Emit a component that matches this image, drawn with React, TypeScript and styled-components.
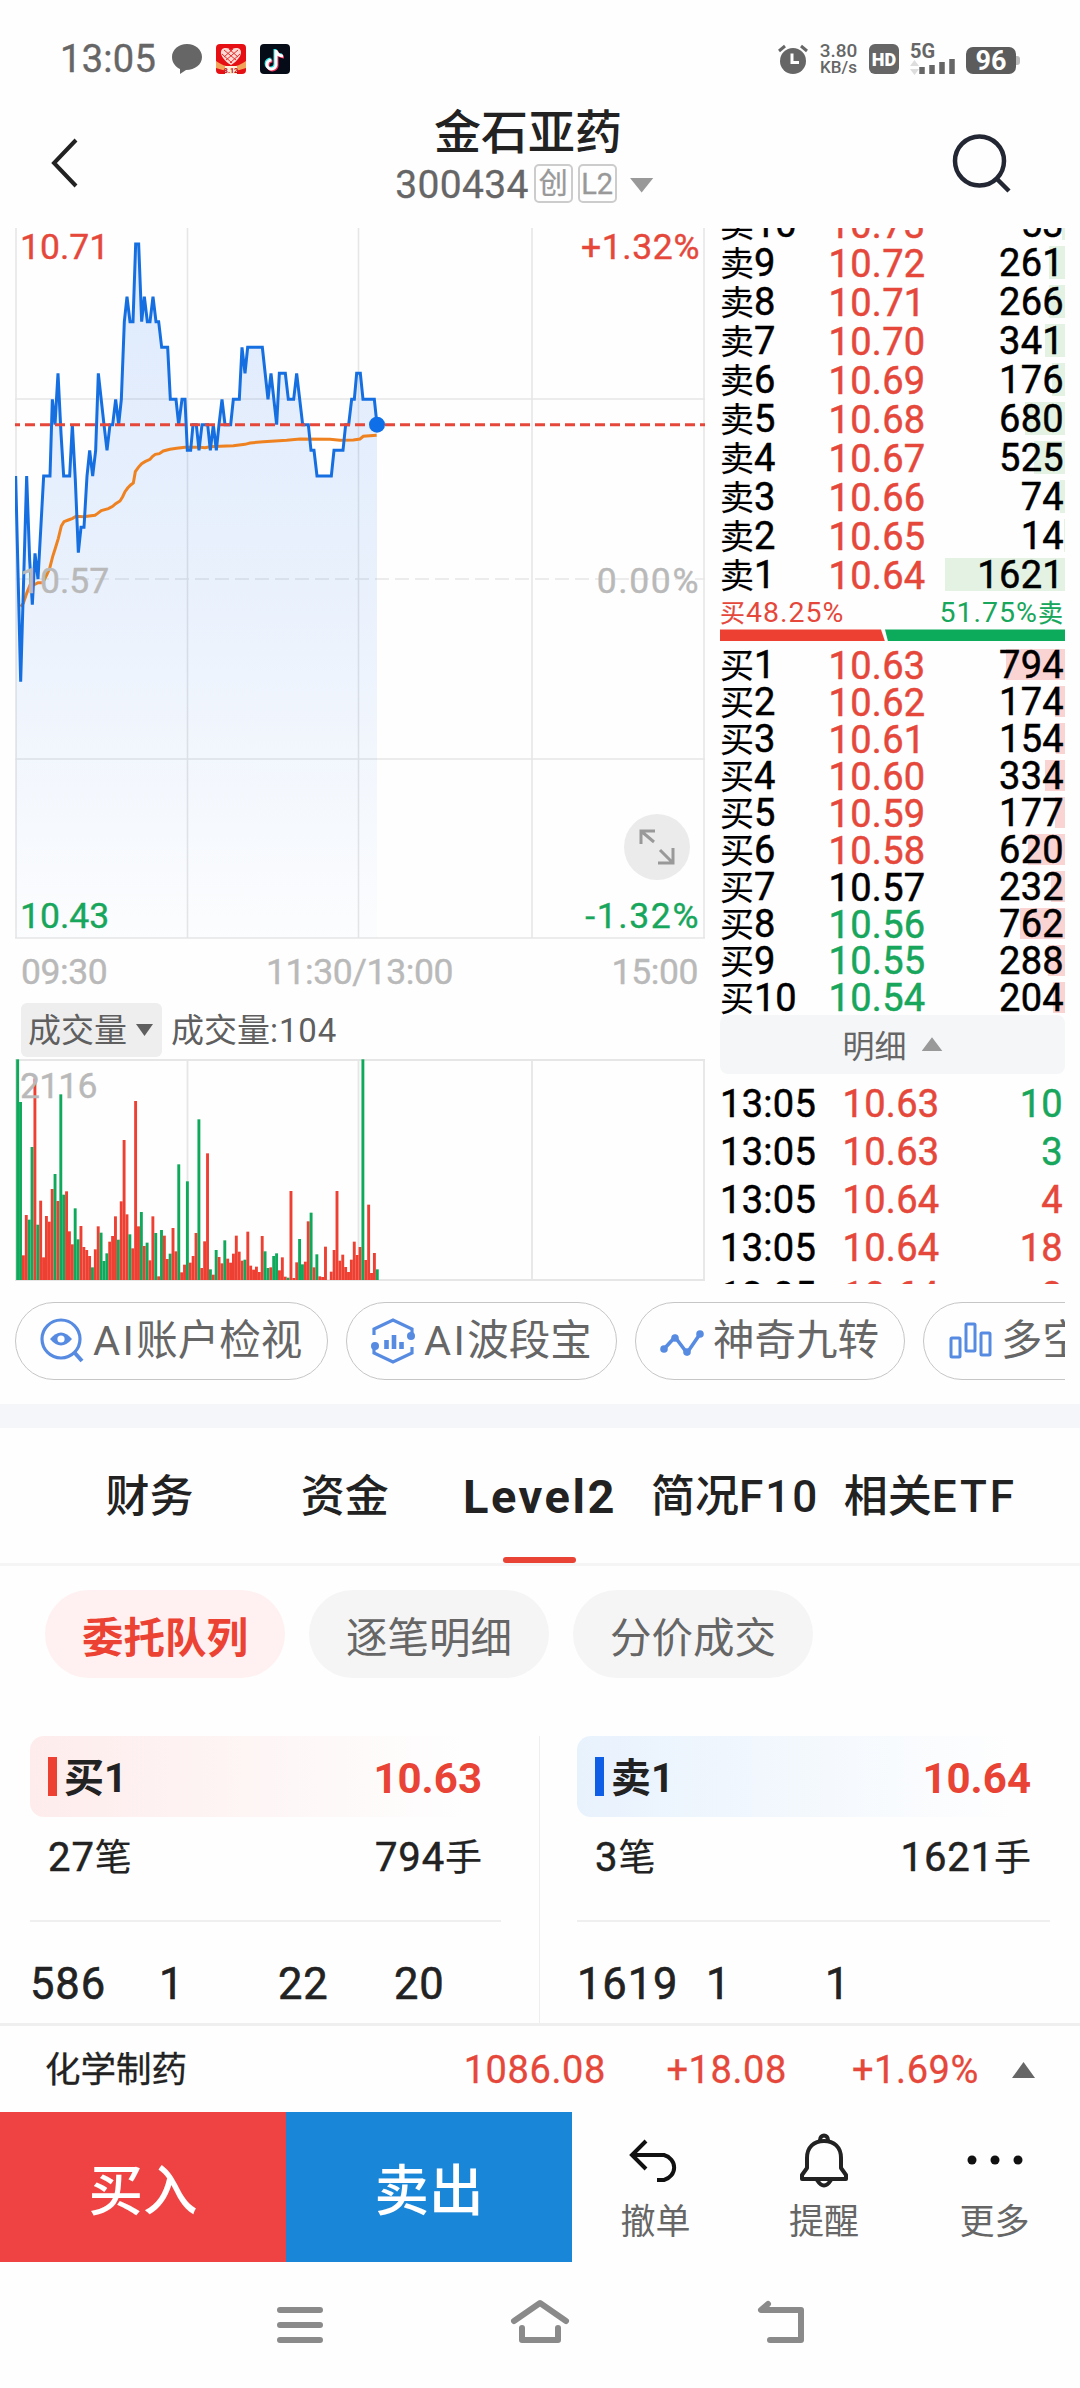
import React from 'react';
import styled, { createGlobalStyle } from 'styled-components';

const RED = '#e5483b';
const GREEN = '#17a65b';

const GlobalStyle = createGlobalStyle`
  * { box-sizing: border-box; }
  body {
    margin: 0;
    background: #fefefe;
    color: #222;
    font-family: Roboto, "Noto Sans CJK SC", sans-serif;
  }
  svg { display: block; flex: none; }
`;

const Screen = styled.div`
  width: 1080px;
  height: 2388px;
  overflow: hidden;
  background: #fefefe;
  display: flex;
  flex-direction: column;
`;

/* ---------- status bar ---------- */
const StatusBar = styled.div`
  height: 100px;
  flex: none;
  padding: 18px 60px 0 60px;
  display: flex;
  align-items: center;
  justify-content: space-between;
  color: #666;
`;
const StatusGroup = styled.div<{ $gap: number }>`
  display: flex;
  align-items: center;
  gap: ${p => p.$gap}px;
`;
const Clock = styled.span`
  font-size: 38px;
  line-height: 40px;
  letter-spacing: 0.3px;
  margin-right: 2px;
  -webkit-text-stroke: 0.4px currentColor;
`;
const NetSpeed = styled.div`
  font-size: 19px;
  line-height: 16.5px;
  text-align: center;
  font-weight: 500;
  width: 39px;
  display: flex;
  flex-direction: column;
  align-items: center;
`;
const NetUnit = styled.span`
  font-size: 17px;
  font-weight: 500;
`;
const Square = styled.div<{ $bg: string }>`
  width: 30px;
  height: 30px;
  border-radius: 4px;
  background: ${p => p.$bg};
  overflow: hidden;
`;
const HdBadge = styled.div`
  width: 30px;
  height: 30px;
  border-radius: 6px;
  background: #666;
  color: #fff;
  font-size: 18px;
  font-weight: 900;
  line-height: 31px;
  text-align: center;
`;
const Battery = styled.div`
  width: 50px;
  height: 27px;
  border-radius: 7px;
  background: #5c5c5c;
  color: #fff;
  font-size: 27px;
  font-weight: 700;
  line-height: 28px;
  text-align: center;
`;
const BatteryWrap = styled.div`
  display: flex;
  align-items: center;
  margin-top: 2px;
  &::after {
    content: '';
    width: 4px;
    height: 9px;
    background: #bbb;
    border-radius: 0 3px 3px 0;
  }
`;
const Signal = styled.div`
  width: 45px;
  height: 32px;
  font-size: 20px;
  line-height: 17px;
  font-weight: 700;
`;

/* ---------- header ---------- */
const Header = styled.header`
  height: 128px;
  flex: none;
  display: grid;
  grid-template-columns: 200px 1fr 200px;
  align-items: center;
`;
const HeaderIcon = styled.div<{ $end?: boolean }>`
  display: flex;
  margin-top: -2px;
  padding: ${p => (p.$end ? '0 68px 0 0' : '0 0 0 50px')};
  justify-content: ${p => (p.$end ? 'flex-end' : 'flex-start')};
`;
const TitleBlock = styled.div`
  display: flex;
  flex-direction: column;
  align-items: center;
  padding: 0 24px 16px 0;
`;
const Title = styled.h1`
  margin: 0;
  font-size: 47px;
  line-height: 58px;
  font-weight: 500;
  color: #222;
`;
const CodeRow = styled.div`
  display: flex;
  align-items: center;
  gap: 5px;
  height: 46px;
  margin-right: 7px;
  color: #666;
  font-size: 39px;
  line-height: 46px;
  letter-spacing: 0.3px;
  -webkit-text-stroke: 0.3px currentColor;
`;
const Tag = styled.span`
  width: 39px;
  height: 39px;
  margin-top: -3px;
  border: 2px solid #ccc;
  border-radius: 5px;
  color: #999;
  font-size: 29px;
  line-height: 37px;
  letter-spacing: 0;
  text-align: center;
`;
const Triangle = styled.i<{ $w: number; $h: number; $c: string; $up?: boolean; $ml?: number }>`
  flex: none;
  width: ${p => p.$w}px;
  height: ${p => p.$h}px;
  margin-left: ${p => p.$ml ?? 0}px;
  background: ${p => p.$c};
  clip-path: ${p => (p.$up ? 'polygon(50% 0, 100% 100%, 0 100%)' : 'polygon(0 0, 100% 0, 50% 100%)')};
`;

/* ---------- market area ---------- */
const Market = styled.section`
  height: 1056px;
  flex: none;
  display: grid;
  grid-template-columns: 705px 345px;
  padding-right: 15px;
  column-gap: 15px;
  overflow: hidden;
`;
const Charts = styled.div`
  padding-left: 15px;
  display: flex;
  flex-direction: column;
`;
const ChartBox = styled.div<{ $h: number }>`
  position: relative;
  height: ${p => p.$h}px;
  flex: none;
`;
const AxisLabel = styled.span<{ $top: number; $right?: boolean; $c: string; $ls?: number }>`
  position: absolute;
  top: ${p => p.$top}px;
  ${p => (p.$right ? 'right: 5px;' : 'left: 5px;')}
  letter-spacing: ${p => p.$ls ?? 0}px;
  font-size: 35.5px;
  line-height: 36px;
  color: ${p => p.$c};
  -webkit-text-stroke: 0.4px currentColor;
`;
const ExpandButton = styled.button`
  position: absolute;
  right: 15px;
  top: 586px;
  width: 66px;
  height: 66px;
  padding: 0;
  border: 0;
  border-radius: 50%;
  background: #ebebeb;
`;
const TimeAxis = styled.div`
  height: 63px;
  display: flex;
  justify-content: space-between;
  padding: 15px 7px 0 6px;
  font-size: 35.5px;
  line-height: 36px;
  letter-spacing: -0.4px;
  color: #b9b9b9;
  -webkit-text-stroke: 0.4px currentColor;
`;
const VolumeHead = styled.div`
  height: 57px;
  padding: 1px 0 2px 6px;
  display: flex;
  gap: 9px;
  color: #5f5f5f;
  font-size: 33px;
  line-height: 55px;
`;
const VolumeSelect = styled.div`
  width: 141px;
  height: 54px;
  border-radius: 6px;
  background: #eee;
  display: flex;
  align-items: center;
  padding-left: 7px;
`;
const Wide = styled.span<{ $ls: number }>`
  letter-spacing: ${p => p.$ls}px;
`;

/* ---------- order book ---------- */
const Book = styled.div`
  overflow: hidden;
`;
const BookSide = styled.div<{ $shift?: number }>`
  margin-top: ${p => p.$shift ?? 0}px;
`;
const BookRow = styled.div<{ $h: number }>`
  height: ${p => p.$h}px;
  display: grid;
  grid-template-columns: 96px 122px 127px;
  align-items: center;
  font-size: 38px;
  line-height: 36px;
  letter-spacing: 0.3px;
  color: #000;
  -webkit-text-stroke: 0.5px currentColor;
`;
const Level = styled.span`
  padding-top: 2px;
  letter-spacing: 0;
  white-space: nowrap;
`;
const Cjk = styled.span<{ $s: number }>`
  font-size: ${p => p.$s}px;
  -webkit-text-stroke-width: 0.2px;
`;
const Price = styled.span<{ $c: string }>`
  color: ${p => p.$c};
  padding-top: 2px;
  text-align: center;
`;
const Qty = styled.span<{ $bar: number; $h: number; $c: string }>`
  height: ${p => p.$h}px;
  line-height: ${p => p.$h + 2}px;
  padding-right: 1px;
  text-align: right;
  background: linear-gradient(${p => p.$c}, ${p => p.$c}) no-repeat right / ${p => p.$bar}px 100%;
`;
const Ratio = styled.div`
  height: 35px;
  padding: 0 1px 0 0;
  display: flex;
  justify-content: space-between;
  font-size: 28.5px;
  line-height: 37px;
  letter-spacing: 1px;
`;
const RatioText = styled.span<{ $c: string }>`
  color: ${p => p.$c};
`;
const RatioBar = styled.div`
  display: flex;
  height: 12px;
  margin-bottom: 4px;
`;
const RatioPart = styled.i<{ $w: number; $c: string; $clip: string }>`
  width: ${p => p.$w}px;
  background: ${p => p.$c};
  clip-path: ${p => p.$clip};
`;
const DetailToggle = styled.div`
  height: 59px;
  display: flex;
  align-items: center;
  justify-content: center;
  border-radius: 8px;
  background: #f5f6f8;
  color: #666;
  font-size: 32px;
`;
const TickRow = styled.div`
  height: 48px;
  display: grid;
  grid-template-columns: 110px 122px 113px;
  align-items: center;
  font-size: 38px;
  line-height: 48px;
  letter-spacing: 0.3px;
  color: #000;
  -webkit-text-stroke: 0.5px currentColor;
`;
const TickText = styled.span`
  padding-top: 2px;
`;
const TickQty = styled(TickText)<{ $c: string }>`
  text-align: right;
  color: ${p => p.$c};
  padding-right: 2px;
`;

/* ---------- tool chips ---------- */
const Chips = styled.div`
  height: 120px;
  flex: none;
  display: flex;
  gap: 18px;
  margin: 0 15px;
  padding-top: 18px;
  overflow: hidden;
`;
const Chip = styled.div<{ $w: number }>`
  flex: none;
  width: ${p => p.$w}px;
  height: 78px;
  display: flex;
  align-items: center;
  gap: 9px;
  padding-left: 24px;
  border: 1.5px solid #c6c6c6;
  border-radius: 39px;
  color: #666;
  font-size: 41.5px;
  line-height: 80px;
  white-space: nowrap;
`;
const Spacer = styled.div`
  height: 24px;
  flex: none;
  background: #f5f6f9;
`;

/* ---------- tabs ---------- */
const Tabs = styled.nav`
  height: 138px;
  flex: none;
  padding: 0 52px;
  display: grid;
  grid-template-columns: repeat(5, 1fr);
  border-bottom: 3px solid #f5f5f5;
`;
const Tab = styled.div<{ $active?: boolean }>`
  display: flex;
  flex-direction: column;
  align-items: center;
  justify-content: space-between;
  padding-top: 35px;
  font-size: ${p => (p.$active ? 47 : 44)}px;
  line-height: 68px;
  font-weight: ${p => (p.$active ? 700 : 500)};
  color: #222;
  white-space: nowrap;
  &::after {
    content: '';
    width: 73px;
    height: 6px;
    border-radius: 3px;
    background: ${p => (p.$active ? '#e94335' : 'transparent')};
  }
`;
const TabText = styled.span<{ $ls?: number }>`
  letter-spacing: ${p => p.$ls ?? 0}px;
`;

const Pills = styled.div`
  flex: none;
  display: flex;
  gap: 24px;
  padding: 24px 45px 58px;
`;
const Pill = styled.div<{ $active?: boolean }>`
  width: 240px;
  height: 88px;
  border-radius: 44px;
  text-align: center;
  font-size: 41.5px;
  line-height: 98px;
  font-weight: ${p => (p.$active ? 700 : 400)};
  color: ${p => (p.$active ? '#ec4234' : '#666')};
  background: ${p => (p.$active ? '#fff1f1' : '#f5f5f5')};
`;

/* ---------- queue ---------- */
const Queues = styled.section`
  height: 287px;
  flex: none;
  display: grid;
  grid-template-columns: 539px 541px;
`;
const Queue = styled.div<{ $second?: boolean }>`
  padding: ${p => (p.$second ? '0 30px 0 37px' : '0 38px 0 30px')};
  border-left: ${p => (p.$second ? '1px solid #eee' : '0')};
`;
const QueueHead = styled.div<{ $bg: string }>`
  height: 81px;
  border-radius: 14px;
  background: linear-gradient(90deg, ${p => p.$bg}, #fefefe 92%);
  display: flex;
  align-items: center;
  padding: 4px 19px 0 18px;
`;
const Marker = styled.i<{ $c: string }>`
  width: 9px;
  height: 39px;
  margin: -4px 7px 0 0;
  background: ${p => p.$c};
`;
const QueueName = styled.b`
  flex: 1;
  font-size: 40px;
  line-height: 60px;
  margin-top: 0;
  font-weight: 700;
`;
const QueuePrice = styled.b`
  font-size: 42px;
  line-height: 60px;
  font-weight: 700;
  color: #e94335;
`;
const QueueTotals = styled.div`
  height: 105px;
  padding: 0 18px;
  display: flex;
  justify-content: space-between;
  font-size: 40px;
  letter-spacing: 0.9px;
  line-height: 82px;
  border-bottom: 2px solid #efefef;
  -webkit-text-stroke: 0.5px currentColor;
`;
const QueueCells = styled.div`
  display: grid;
  grid-template-columns: 129px 119px 116px 1fr;
  padding-top: 29px;
  font-size: 43.5px;
  letter-spacing: 0.9px;
  line-height: 68px;
  -webkit-text-stroke: 0.6px currentColor;
`;

/* ---------- sector strip ---------- */
const Sector = styled.div`
  height: 89px;
  flex: none;
  border-top: 3px solid #efefef;
  padding: 2px 45px 0 45px;
  display: grid;
  grid-template-columns: 1fr 181px 181px 192px 56px;
  align-items: center;
  font-size: 38px;
  line-height: 60px;
  letter-spacing: 0.6px;
  color: ${RED};
  -webkit-text-stroke: 0.3px currentColor;
`;
const SectorName = styled.span`
  font-size: 35.5px;
  letter-spacing: 0;
  color: #222;
`;
const SectorValue = styled.span`
  text-align: right;
`;
const SectorArrow = styled.span`
  display: flex;
  justify-content: flex-end;
`;

/* ---------- bottom actions ---------- */
const Actions = styled.div`
  height: 150px;
  flex: none;
  display: grid;
  grid-template-columns: 286px 286px 167px 170px 171px;
  grid-template-rows: 150px;
`;
const Trade = styled.div<{ $bg: string }>`
  background: ${p => p.$bg};
  padding-top: 8px;
  color: #fff;
  font-size: 54.5px;
  font-weight: 500;
  line-height: 142px;
  text-align: center;
`;
const Action = styled.div`
  display: flex;
  flex-direction: column;
  align-items: center;
  padding-top: 19px;
  gap: 10px;
  color: #666;
  font-size: 35px;
  line-height: 44px;
`;
const NavBar = styled.div`
  flex: 1;
  display: flex;
  justify-content: space-between;
  padding: 32px 270px 0;
`;

/* ---------- data ---------- */
const priceLine =
  '47,768 62,1385 80,768 89,1020 97,1154 105,1000 114,1077 131,768 150,768 157,538 165,614 174,460 183,640 191,768 209,768 217,614 226,780 235,998 243,922 252,922 261,768 269,691 278,768 287,691 295,460 312,614 321,691 330,614 338,614 347,538 356,614 364,538 373,305 381,230 390,305 399,305 407,72 416,72 425,305 433,230 442,305 450,305 459,230 468,305 476,305 485,382 503,382 511,538 528,538 536,614 546,538 555,538 562,691 572,691 579,614 589,614 597,691 606,614 623,614 631,691 640,614 649,691 657,614 666,538 675,614 692,614 700,538 718,538 726,382 735,460 743,382 787,382 804,538 813,460 830,614 838,460 856,460 865,538 881,538 890,460 908,614 925,614 933,691 942,691 951,768 994,768 1002,691 1029,691 1037,614 1046,614 1055,538 1063,538 1070,460 1081,460 1089,538 1123,538 1131,614';
const averageLine =
  '62,1160 70,1150 80,1120 90,1095 105,1093 114,1088 128,1088 140,1065 149,1045 158,1010 166,985 175,955 184,918 192,905 205,900 218,895 228,889 250,890 285,886 292,881 304,872 325,866 338,859 347,851 360,843 368,830 375,815 383,804 392,795 400,789 406,755 415,742 425,731 435,725 450,718 458,709 466,703 478,701 490,693 510,688 530,685 555,682 600,682 615,683 630,680 660,679 700,677 735,673 750,669 790,665 860,661 900,657 990,658 1020,661 1060,660 1080,657 1090,649 1130,646';

// Volume per minute: bar height in thirds of a pixel, "g" marks a falling minute.
const volumes =
  '662g 534g 74 195 181g 399g 605 166g 238 68 192 175 273 318g 237 557g 256g 266 146 107 215g 122g 162 99 90 72 38g 92 161 142g 57g 80g 115 132 191 121g 236 420 197 137g 95 537 161 204g 102 112g 59 191 141g 11 150g 133 63 79g 156 86 347g 23 46 296g 52 72 141 482g 36 116 380 32g 16 90g 69 50 119g 64 52 79 133 85 58 61g 145 43 31 40 24 132 86g 36g 38 72g 80g 29 68 10 7g 267 6 53 123g 47g 55 176 202g 38 77g 11 9 100 0 25 90 267 58 76 39 24 61 115 75 99 662g 60 226 21 81 32g'.split(' ');

type Entry = [string, string, number, number];
const asks: Entry[] = [
  ['10', '10.73', 53, 3],
  ['9', '10.72', 261, 16],
  ['8', '10.71', 266, 16],
  ['7', '10.70', 341, 20],
  ['6', '10.69', 176, 13],
  ['5', '10.68', 680, 40],
  ['4', '10.67', 525, 31],
  ['3', '10.66', 74, 5],
  ['2', '10.65', 14, 1],
  ['1', '10.64', 1621, 120],
];
const bids: Entry[] = [
  ['1', '10.63', 794, 59],
  ['2', '10.62', 174, 10],
  ['3', '10.61', 154, 9],
  ['4', '10.60', 334, 20],
  ['5', '10.59', 177, 10],
  ['6', '10.58', 620, 37],
  ['7', '10.57', 232, 14],
  ['8', '10.56', 762, 45],
  ['9', '10.55', 288, 17],
  ['10', '10.54', 204, 12],
];
const ticks: [string, number, boolean][] = [
  ['10.63', 10, false],
  ['10.63', 3, false],
  ['10.64', 4, true],
  ['10.64', 18, true],
  ['10.64', 8, true],
];

const priceColor = (p: string) => (p === '10.57' ? '#000' : Number(p) > 10.57 ? RED : GREEN);
const gridX = [1, 172.5, 343.5, 517, 689];

const PriceChart = () => (
  <ChartBox $h={711}>
    <svg width="690" height="711">
      <defs>
        <linearGradient id="area" x1="0" y1="0" x2="0" y2="1">
          <stop offset="0" stopColor="#1a6ff0" stopOpacity=".14" />
          <stop offset=".5" stopColor="#1a6ff0" stopOpacity=".09" />
          <stop offset="1" stopColor="#1a6ff0" stopOpacity=".01" />
        </linearGradient>
      </defs>
      <g stroke="#e6e6e6" strokeWidth="1.6">
        {gridX.map(x => <line key={x} x1={x} x2={x} y1="0" y2="710" />)}
        <line x1="0" x2="690" y1="171" y2="171" />
        <line x1="0" x2="690" y1="531" y2="531" />
        <line x1="0" x2="690" y1="710" y2="710" />
        <line x1="0" x2="690" y1="351" y2="351" strokeDasharray="14 6" />
      </g>
      <g transform="translate(-15 -8) scale(.33333)">
        <polygon points={`${priceLine} 1131,2154 47,2154`} fill="url(#area)" />
        <polyline points={averageLine} fill="none" stroke="#ef8220" strokeWidth="9" />
        <polyline points={priceLine} fill="none" stroke="#166fe0" strokeWidth="9" />
      </g>
      <line x1="0" x2="690" y1="196.7" y2="196.7" stroke={RED} strokeWidth="3" strokeDasharray="10 5" strokeDashoffset="5" />
      <circle cx="362" cy="196.7" r="8" fill="#0f6fe8" />
    </svg>
    <AxisLabel $top={1} $c={RED}>10.71</AxisLabel>
    <AxisLabel $top={1} $right $ls={0.6} $c={RED}>+1.32%</AxisLabel>
    <AxisLabel $top={335} $c="#b9b9b9">10.57</AxisLabel>
    <AxisLabel $top={335} $right $ls={1.6} $c="#b9b9b9">0.00%</AxisLabel>
    <AxisLabel $top={670} $c={GREEN}>10.43</AxisLabel>
    <AxisLabel $top={670} $right $ls={1.6} $c={GREEN}>-1.32%</AxisLabel>
    <ExpandButton>
      <svg width="66" height="66" fill="none" stroke="#999" strokeWidth="3">
        <path d="M17 30V17H31M17 17L30 28M36 36L49 49M49 34V49H34" />
      </svg>
    </ExpandButton>
  </ChartBox>
);

const VolumeChart = () => (
  <ChartBox $h={223}>
    <svg width="690" height="223">
      <g stroke="#e6e6e6" strokeWidth="1.8">
        {gridX.map(x => <line key={x} x1={x} x2={x} y1="0" y2="221" />)}
        <line x1="0" x2="690" y1="1" y2="1" />
        <line x1="0" x2="690" y1="221" y2="221" />
      </g>
      {volumes.map((v, i) => {
        const h = parseInt(v, 10) / 3;
        return (
          <rect key={i} x={1.2 + i * 2.877} y={221 - h} width="2.9" height={h} fill={v.endsWith('g') ? '#0fa95c' : '#ee4032'} />
        );
      })}
    </svg>
    <AxisLabel $top={9} $ls={-0.8} $c="#b9b9b9">2116</AxisLabel>
  </ChartBox>
);

const BookRows = ({ side, rows, h, barH, tint }: { side: string; rows: Entry[]; h: number; barH: number; tint: string }) => (
  <>
    {rows.map(([level, price, qty, bar]) => (
      <BookRow key={level} $h={h}>
        <Level><Cjk $s={34}>{side}</Cjk>{level}</Level>
        <Price $c={priceColor(price)}>{price}</Price>
        <Qty $bar={bar} $h={barH} $c={tint}>{qty}</Qty>
      </BookRow>
    ))}
  </>
);

const EyeIcon = () => (
  <svg width="44" height="46" viewBox="0 0 44 46" fill="none" stroke="#578be2" strokeWidth="3.2">
    <circle cx="21" cy="21" r="19" />
    <path d="M34 34L42 43" strokeWidth="4" />
    <path d="M10 21Q21 8 32 21Q21 34 10 21Z" fill="#578be2" stroke="none" />
    <circle cx="21" cy="21" r="3.6" fill="#fff" stroke="none" />
  </svg>
);
const HexIcon = () => (
  <svg width="44" height="46" viewBox="0 0 44 46" fill="none" stroke="#578be2" strokeWidth="3.2">
    <path d="M3 17V11L22 2L41 11V17M3 29V35L22 44L41 35V29" />
    <circle cx="40" cy="18" r="4" fill="#578be2" stroke="none" />
    <circle cx="4" cy="28" r="4" fill="#578be2" stroke="none" />
    <path d="M15.500 31V22M23 31V17M30.500 31V24" strokeWidth="4.600" />
  </svg>
);
const ZigzagIcon = () => (
  <svg width="44" height="46" viewBox="0 0 44 46" fill="none" stroke="#578be2" strokeWidth="3.600">
    <path d="M4 31L15 19L27 35L40 16" />
    <g fill="#578be2" stroke="none">
      <circle cx="4" cy="31" r="3.800" /><circle cx="15" cy="20" r="3.800" /><circle cx="27" cy="34" r="3.800" /><circle cx="40" cy="16" r="3.800" />
    </g>
  </svg>
);
const BarsIcon = () => (
  <svg width="44" height="46" viewBox="0 0 44 46" fill="none" stroke="#578be2" strokeWidth="3">
    <rect x="3" y="20" width="9" height="19" rx="1" />
    <rect x="18" y="6" width="9" height="27" rx="1" />
    <rect x="33" y="15" width="9" height="22" rx="1" />
  </svg>
);

export default function App() {
  return (
    <>
      <GlobalStyle />
      <Screen>
        <StatusBar>
          <StatusGroup $gap={14}>
            <Clock>13:05</Clock>
            <svg width="30" height="30" viewBox="0 0 30 30">
              <path d="M15 0C6.500 0 0 5.800 0 13C0 19 4 23 8 25L8 30L14 26C23 26 30 20.500 30 13C30 5.800 23.500 0 15 0Z" fill="#666" />
            </svg>
            <Square $bg="#e60f14">
              <svg width="30" height="30" viewBox="0 0 30 30">
                <path d="M15 21C1 12 4 3 10 4Q14 4 15 7Q16 4 20 4C26 3 29 12 15 21Z" fill="#ffd9d4" />
                <path d="M8 6L20 16M13 5L22 13M6 10L16 19M22 6L10 16M17 5L8 13M24 10L14 19" stroke="#e2302c" strokeWidth="1" />
                <path d="M0 17Q15 28 30 17V24Q15 30 0 24Z" fill="#f3a45b" />
                <path d="M9 22H21V30H9Z" fill="#fff0dd" />
                <text x="15" y="29" fontSize="7" fontWeight="900" textAnchor="middle" fill="#c8161a">8.12</text>
              </svg>
            </Square>
            <Square $bg="#060b18">
              <svg width="30" height="30" viewBox="0 0 30 30" fill="none" strokeWidth="3">
                <path d="M15 5V20A4.500 4.500 0 1 1 10.500 15M15 6Q17 11 22 11" stroke="#2ce5e5" />
                <path d="M17 7V22A4.500 4.500 0 1 1 12.500 17M17 8Q19 13 24 13" stroke="#f2315a" />
                <path d="M16 6V21A4.500 4.500 0 1 1 11.500 16M16 7Q18 12 23 12" stroke="#fff" />
              </svg>
            </Square>
          </StatusGroup>
          <StatusGroup $gap={11}>
            <svg width="30" height="30" viewBox="0 0 30 30">
              <circle cx="15" cy="17" r="13" fill="#666" />
              <path d="M1 7L7 2M29 7L23 2" stroke="#666" strokeWidth="3" />
              <path d="M14 9.500V18.500H21" fill="none" stroke="#fff" strokeWidth="3" />
            </svg>
            <NetSpeed><span>3.80</span><NetUnit>KB/s</NetUnit></NetSpeed>
            <HdBadge>HD</HdBadge>
            <Signal>
              5G
              <svg width="45" height="16" viewBox="0 0 45 16" overflow="visible">
                <path d="M0 6L4.500 0L9 6ZM0 9H9L4.500 15Z" fill="#ddd" />
                <path d="M12 14V7M22 14V5M32 14V2M42 14V-1" stroke="#666" strokeWidth="5.500" />
              </svg>
            </Signal>
            <BatteryWrap><Battery>96</Battery></BatteryWrap>
          </StatusGroup>
        </StatusBar>

        <Header>
          <HeaderIcon>
            <svg width="30" height="52" viewBox="0 0 30 52" fill="none" stroke="#222" strokeWidth="4">
              <path d="M26 3L4 26L26 49" />
            </svg>
          </HeaderIcon>
          <TitleBlock>
            <Title>金石亚药</Title>
            <CodeRow>
              300434
              <Tag>创</Tag>
              <Tag>L2</Tag>
              <Triangle $w={24} $h={15} $c="#999" $ml={8} />
            </CodeRow>
          </TitleBlock>
          <HeaderIcon $end>
            <svg width="60" height="60" viewBox="0 0 60 60" fill="none" stroke="#232733" strokeWidth="4.500">
              <circle cx="27.500" cy="28" r="24.500" />
              <path d="M45 46L57 58" />
            </svg>
          </HeaderIcon>
        </Header>

        <Market>
          <Charts>
            <PriceChart />
            <TimeAxis><span>09:30</span><span>11:30/13:00</span><span>15:00</span></TimeAxis>
            <VolumeHead>
              <VolumeSelect>成交量<Triangle $w={17} $h={12} $c="#5f5f5f" $ml={9} /></VolumeSelect>
              <span>成交量<Wide $ls={0.9}>:104</Wide></span>
            </VolumeHead>
            <VolumeChart />
          </Charts>
          <Book>
            <BookSide $shift={-24}>
              <BookRows side="卖" rows={asks} h={39.05} barH={33} tint="#e3f2e3" />
            </BookSide>
            <Ratio>
              <RatioText $c={RED}><Cjk $s={25}>买</Cjk>48.25%</RatioText>
              <RatioText $c={GREEN}>51.75%<Cjk $s={25}>卖</Cjk></RatioText>
            </Ratio>
            <RatioBar>
              <RatioPart $w={165} $c="#ee4032" $clip="polygon(0 0, 161px 0, 100% 100%, 0 100%)" />
              <RatioPart $w={180} $c="#0cab5b" $clip="polygon(0 0, 100% 0, 100% 100%, 3px 100%)" />
            </RatioBar>
            <BookSide>
              <BookRows side="买" rows={bids} h={36.95} barH={31} tint="#f9d4d3" />
            </BookSide>
            <DetailToggle>明细<Triangle $w={21} $h={14} $c="#999" $ml={15} $up /></DetailToggle>
            <BookSide $shift={4}>
              {ticks.map(([price, qty, up], i) => (
                <TickRow key={i}>
                  <TickText>13:05</TickText>
                  <Price $c={RED}>{price}</Price>
                  <TickQty $c={up ? RED : GREEN}>{qty}</TickQty>
                </TickRow>
              ))}
            </BookSide>
          </Book>
        </Market>

        <Chips>
          <Chip $w={313}><EyeIcon /><span><Wide $ls={2.5}>AI</Wide>账户检视</span></Chip>
          <Chip $w={271}><HexIcon /><span><Wide $ls={2.5}>AI</Wide>波段宝</span></Chip>
          <Chip $w={270}><ZigzagIcon />神奇九转</Chip>
          <Chip $w={270}><BarsIcon />多空资金</Chip>
        </Chips>
        <Spacer />

        <Tabs>
          <Tab><TabText>财务</TabText></Tab>
          <Tab><TabText>资金</TabText></Tab>
          <Tab $active><TabText $ls={2.5}>Level2</TabText></Tab>
          <Tab><TabText>简况<Wide $ls={2}>F10</Wide></TabText></Tab>
          <Tab><TabText>相关<Wide $ls={3}>ETF</Wide></TabText></Tab>
        </Tabs>
        <Pills>
          <Pill $active>委托队列</Pill>
          <Pill>逐笔明细</Pill>
          <Pill>分价成交</Pill>
        </Pills>

        <Queues>
          <Queue>
            <QueueHead $bg="#feecec">
              <Marker $c="#ee4032" /><QueueName>买1</QueueName><QueuePrice>10.63</QueuePrice>
            </QueueHead>
            <QueueTotals><span>27<Cjk $s={37}>笔</Cjk></span><span>794<Cjk $s={37}>手</Cjk></span></QueueTotals>
            <QueueCells><span>586</span><span>1</span><span>22</span><span>20</span></QueueCells>
          </Queue>
          <Queue $second>
            <QueueHead $bg="#e8f2fd">
              <Marker $c="#0f5fe6" /><QueueName>卖1</QueueName><QueuePrice>10.64</QueuePrice>
            </QueueHead>
            <QueueTotals><span>3<Cjk $s={37}>笔</Cjk></span><span>1621<Cjk $s={37}>手</Cjk></span></QueueTotals>
            <QueueCells><span>1619</span><span>1</span><span>1</span></QueueCells>
          </Queue>
        </Queues>

        <Sector>
          <SectorName>化学制药</SectorName>
          <SectorValue>1086.08</SectorValue>
          <SectorValue>+18.08</SectorValue>
          <SectorValue>+1.69%</SectorValue>
          <SectorArrow><Triangle $w={23} $h={16} $c="#666" $up /></SectorArrow>
        </Sector>

        <Actions>
          <Trade $bg="#ef4343">买入</Trade>
          <Trade $bg="#1986d7">卖出</Trade>
          <Action>
            <svg width="56" height="60" viewBox="0 0 56 60" fill="none" stroke="#111" strokeWidth="4">
              <path d="M18 10L4 24L18 38M4 24H36A14 13 0 0 1 36 49H29" />
            </svg>
            撤单
          </Action>
          <Action>
            <svg width="56" height="60" viewBox="0 0 56 60" fill="none" stroke="#222" strokeWidth="4" strokeLinejoin="round">
              <path d="M11 37V27C11 16 18 10 28 10C38 10 45 16 45 27V37L50 44V48H6V44Z" />
              <path d="M24 9C24 3 32 3 32 9M21 49Q28 60 35 49" />
            </svg>
            提醒
          </Action>
          <Action>
            <svg width="56" height="60" viewBox="0 0 56 60" fill="#111">
              <circle cx="5" cy="29" r="4.500" /><circle cx="28" cy="29" r="4.500" /><circle cx="51" cy="29" r="4.500" />
            </svg>
            更多
          </Action>
        </Actions>

        <NavBar>
          <svg width="60" height="56" viewBox="0 0 60 56" stroke="#8a8a8a" strokeWidth="6" strokeLinecap="round">
            <path d="M10 16H50M10 31H50M10 46H50" />
          </svg>
          <svg width="60" height="56" viewBox="0 0 60 56" fill="none" stroke="#8a8a8a" strokeWidth="6" strokeLinecap="round" strokeLinejoin="round">
            <path d="M4 27L30 9L56 27M12 34V46H48V34" />
          </svg>
          <svg width="60" height="56" viewBox="0 0 60 56" fill="none" stroke="#8a8a8a" strokeWidth="6" strokeLinecap="round" strokeLinejoin="round">
            <path d="M18 10L11 16H51V46H20" />
          </svg>
        </NavBar>
      </Screen>
    </>
  );
}
